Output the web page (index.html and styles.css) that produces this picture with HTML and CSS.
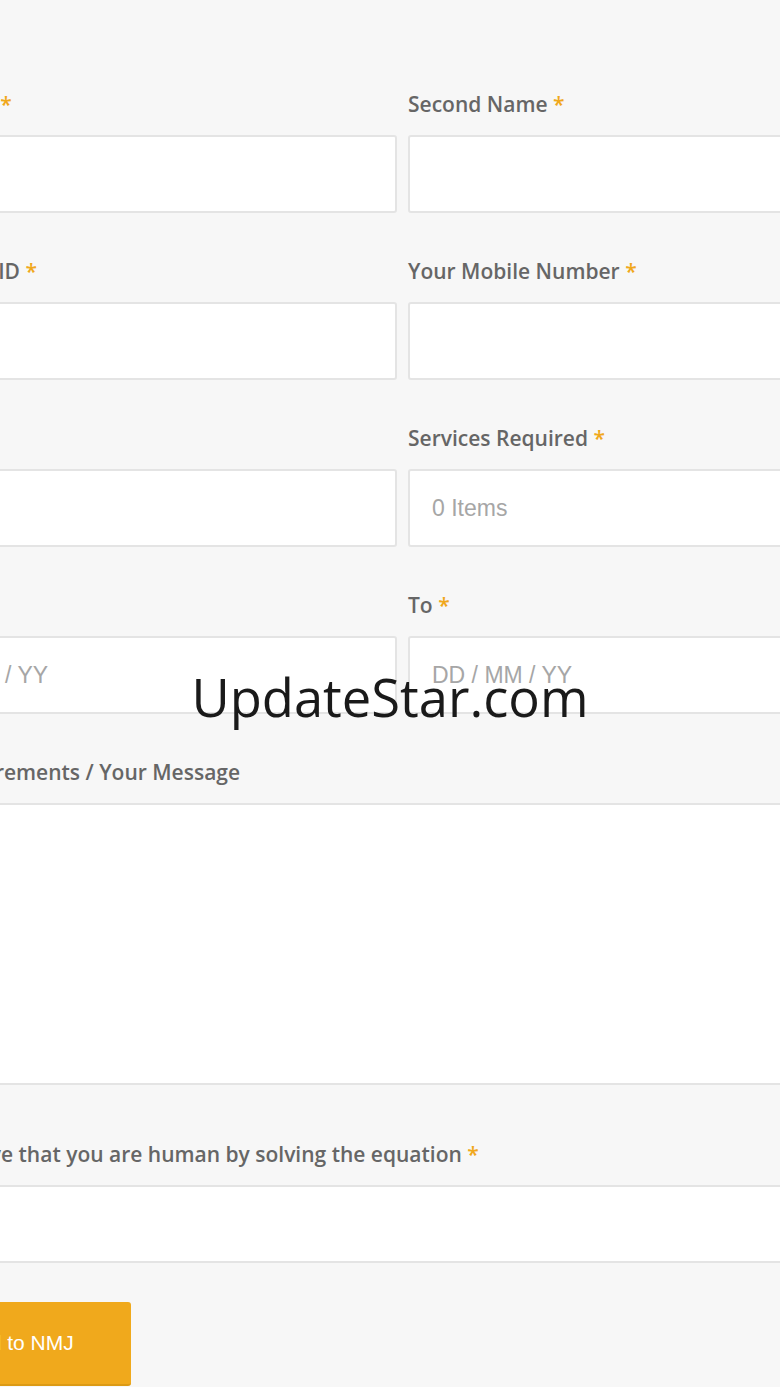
FILE: index.html
```html
<!DOCTYPE html>
<html lang="en">
<head>
<meta charset="utf-8">
<title>Enquiry Form</title>
<link rel="stylesheet" href="styles.css">
</head>
<body>
<form class="form">
  <div class="grid">
    <div class="field">
      <label class="label">First Name <span class="req">*</span></label>
      <div class="input"></div>
    </div>
    <div class="field">
      <label class="label">Second Name <span class="req">*</span></label>
      <div class="input"></div>
    </div>
    <div class="field">
      <label class="label">Your Email ID <span class="req">*</span></label>
      <div class="input"></div>
    </div>
    <div class="field">
      <label class="label">Your Mobile Number <span class="req">*</span></label>
      <div class="input"></div>
    </div>
    <div class="field">
      <label class="label">Country</label>
      <div class="input"></div>
    </div>
    <div class="field">
      <label class="label">Services Required <span class="req">*</span></label>
      <div class="input"><span class="ph">0 Items</span></div>
    </div>
    <div class="field">
      <label class="label">From <span class="req">*</span></label>
      <div class="input"><span class="ph">DD / MM / YY</span></div>
    </div>
    <div class="field">
      <label class="label">To <span class="req">*</span></label>
      <div class="input"><span class="ph">DD / MM / YY</span></div>
    </div>
  </div>
  <div class="field wide">
    <label class="label">Your Requirements / Your Message</label>
    <div class="textarea"></div>
  </div>
  <div class="field wide captcha">
    <label class="label">Please prove that you are human by solving the equation <span class="req">*</span></label>
    <div class="input"></div>
  </div>
  <button type="button" class="btn">Send to NMJ</button>
</form>
<div class="watermark">UpdateStar.com</div>
</body>
</html>
```

FILE: styles.css
```css
html, body {
  margin: 0;
  padding: 0;
  background: #f7f7f7;
  overflow: hidden;
}
body {
  position: relative;
  width: 780px;
  height: 1387px;
}
.form {
  margin-left: -116px;
  width: 1037px;
  padding-top: 89px;
  font-family: "Open Sans", "Noto Sans", sans-serif;
}
.grid {
  display: grid;
  grid-template-columns: 513px 513px;
  column-gap: 11px;
}
.field {
  display: flex;
  flex-direction: column;
  margin-bottom: 43px;
}
.label {
  display: block;
  height: 30px;
  line-height: 30px;
  font-size: 21px;
  font-weight: 600;
  color: #666;
  margin-bottom: 16px;
  white-space: nowrap;
}
.req {
  color: #f0a81c;
}
.input {
  box-sizing: border-box;
  height: 78px;
  background: #fff;
  border: 2px solid #e4e4e4;
  border-radius: 3px;
  display: flex;
  align-items: center;
  padding-left: 22px;
}
.ph {
  font-family: "Liberation Sans", Arial, sans-serif;
  font-size: 23px;
  color: #a6a6a6;
}
.textarea {
  box-sizing: border-box;
  height: 282px;
  background: #fff;
  border: 2px solid #e4e4e4;
  border-radius: 3px;
}
.field.wide {
  margin-bottom: 54px;
}
.captcha .label {
  margin-bottom: 16px;
}
.field.captcha {
  margin-bottom: 39px;
}
.btn {
  display: block;
  box-sizing: border-box;
  width: 247px;
  height: 84px;
  background: #f0a91c;
  border: none;
  border-bottom: 2px solid #dc9a14;
  border-radius: 3px;
  color: #fff;
  font-family: "Liberation Sans", Arial, sans-serif;
  font-size: 21px;
  padding: 0 0 0 11px;
  text-align: center;
}
.watermark {
  position: absolute;
  left: 0;
  right: 0;
  top: 661px;
  text-align: center;
  font-family: "Open Sans", "Noto Sans", sans-serif;
  font-size: 52.5px;
  line-height: 72px;
  color: #1a1a1a;
}
```
